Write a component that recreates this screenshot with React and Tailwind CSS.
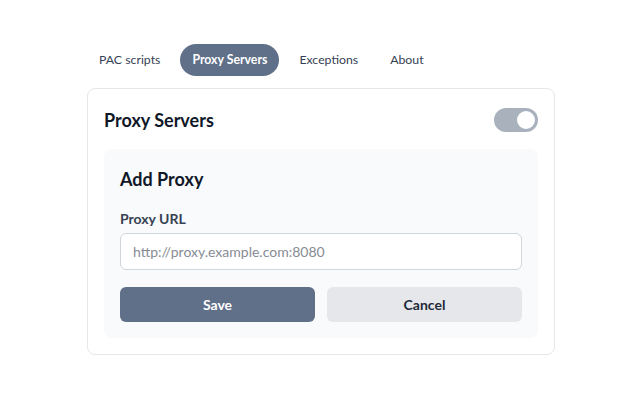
export default function App() {
  const tabs = ["PAC scripts", "Proxy Servers", "Exceptions", "About"];
  return (
    <div className="min-h-[400px] w-[640px] bg-white font-['Lato',sans-serif] text-gray-900">
      <div className="ml-[87px] w-[468px] pt-[44px]">
        {/* tabs */}
        <div className="flex gap-2">
          {tabs.map((t) => (
            <div
              key={t}
              className={`flex h-8 items-center rounded-full px-3 text-[12.3px] ${
                t === "Proxy Servers" ? "bg-[#607089] font-bold text-white" : "text-gray-700"
              }`}
            >
              {t}
            </div>
          ))}
        </div>

        {/* card */}
        <div className="mt-3 rounded-lg border border-gray-200 bg-white p-4">
          <div className="flex h-[30px] items-center justify-between">
            <h2 className="text-[18px] font-bold">Proxy Servers</h2>
            <div className="flex h-6 w-11 items-center justify-end rounded-full bg-[#a9b1bd] px-[3px]">
              <div className="h-[18px] w-[18px] rounded-full bg-white" />
            </div>
          </div>

          <div className="mt-[14px] rounded-lg bg-gray-50 p-4">
            <h3 className="h-7 text-[18px] leading-7 font-bold">Add Proxy</h3>
            <label className="mt-4 block text-[14px] leading-5 font-bold text-gray-700">Proxy URL</label>
            <input
              className="mt-1 h-[37px] w-full rounded-md border border-gray-300 bg-white px-3 text-[14px] outline-none placeholder:text-[#878c94]"
              placeholder="http://proxy.example.com:8080"
            />
            <div className="mt-[17px] grid grid-cols-2 gap-3">
              <button className="h-[35px] rounded-md bg-[#607089] text-[14px] font-bold text-white">Save</button>
              <button className="h-[35px] rounded-md bg-gray-200 text-[14px] font-bold text-gray-800">Cancel</button>
            </div>
          </div>
        </div>
      </div>
    </div>
  );
}
